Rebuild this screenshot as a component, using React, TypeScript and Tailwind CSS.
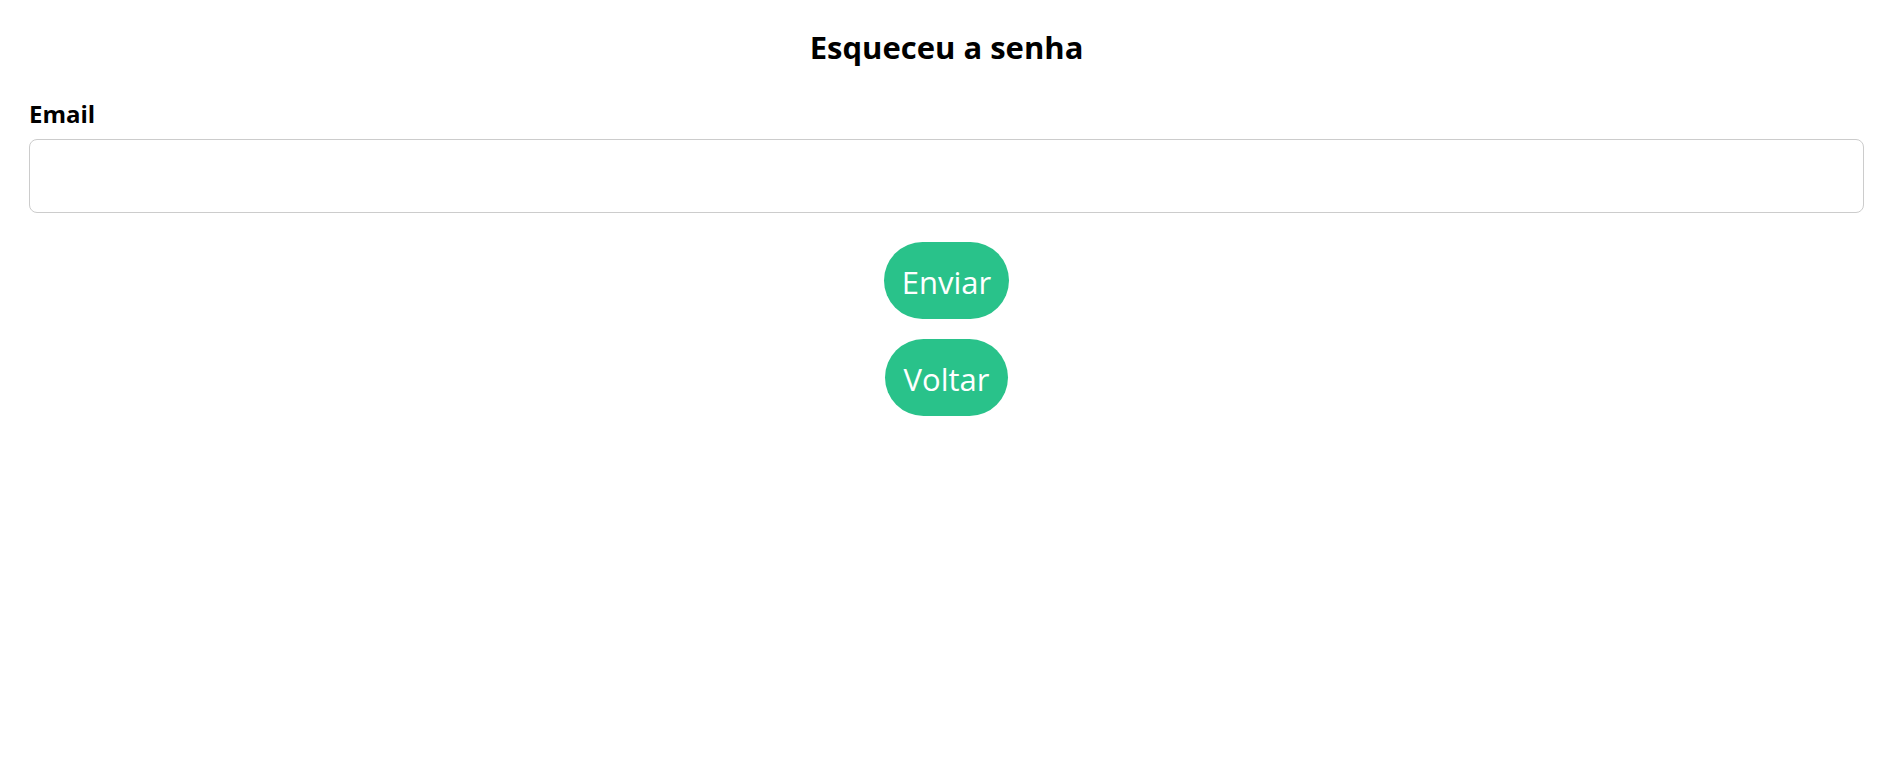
export default function App() {
  return (
    <div className="min-h-[758px] bg-white pl-[29px] pr-[37px] font-['Open_Sans',sans-serif] text-black">
      <h1 className="pt-[27px] text-center text-[31px] font-bold leading-[40px]">Esqueceu a senha</h1>
      <form className="mt-[31px] flex flex-col" onSubmit={(e) => e.preventDefault()}>
        <label htmlFor="email" className="text-[24px] font-bold leading-[32px]">
          Email
        </label>
        <input
          id="email"
          type="email"
          className="mt-[9px] h-[74px] w-full rounded-[8px] border border-[#cccccc] px-4 text-[20px] outline-none"
        />
        <div className="mt-[29px] flex flex-col items-center gap-[20px]">
          <button
            type="submit"
            className="flex h-[77px] w-[125px] items-center justify-center rounded-full bg-[#29c28a] pt-[3px] text-[31px] leading-[40px] text-white"
          >
            Enviar
          </button>
          <button
            type="button"
            className="flex h-[77px] w-[123px] items-center justify-center rounded-full bg-[#29c28a] pt-[3px] text-[31px] leading-[40px] text-white"
          >
            Voltar
          </button>
        </div>
      </form>
    </div>
  );
}
